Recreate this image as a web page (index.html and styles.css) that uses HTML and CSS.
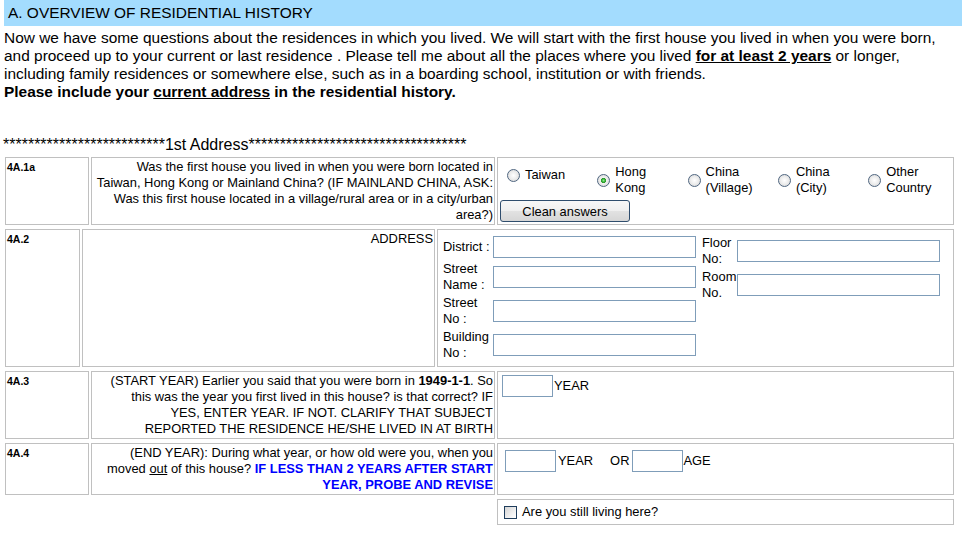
FILE: index.html
```html
<!DOCTYPE html>
<html lang="en">
<head>
<meta charset="utf-8">
<title>Residential History</title>
<link rel="stylesheet" href="styles.css">
</head>
<body>
<div class="page">
  <div class="section-title">A. OVERVIEW OF RESIDENTIAL HISTORY</div>
  <p class="intro">Now we have some questions about the residences in which you lived. We will start with the first house you lived in when you were born,<br>and proceed up to your current or last residence . Please tell me about all the places where you lived <b><u>for at least 2 years</u></b> or longer,<br>including family residences or somewhere else, such as in a boarding school, institution or with friends.<br><b>Please include your <u>current address</u> in the residential history.</b></p>

  <div class="divider">**************************1st Address***********************************</div>

  <div class="qrow cols-a">
    <div class="cell code">4A.1a</div>
    <div class="cell question">Was the first house you lived in when you were born located in<br>Taiwan, Hong Kong or Mainland China? (IF MAINLAND CHINA, ASK:<br>Was this first house located in a village/rural area or in a city/urban<br>area?)</div>
    <div class="cell answer">
      <div class="options">
        <label class="option option-single"><input type="radio" name="loc"><span>Taiwan</span></label>
        <label class="option"><input type="radio" name="loc" checked><span>Hong<br>Kong</span></label>
        <label class="option"><input type="radio" name="loc"><span>China<br>(Village)</span></label>
        <label class="option"><input type="radio" name="loc"><span>China<br>(City)</span></label>
        <label class="option"><input type="radio" name="loc"><span>Other<br>Country</span></label>
      </div>
      <button class="btn" type="button">Clean answers</button>
    </div>
  </div>

  <div class="qrow cols-b">
    <div class="cell code">4A.2</div>
    <div class="cell question">ADDRESS</div>
    <div class="cell address-cell">
      <div class="addr-grid left">
        <div class="lbl">District :</div><div class="fld"><input type="text"></div>
        <div class="lbl">Street<br>Name :</div><div class="fld"><input type="text"></div>
        <div class="lbl">Street<br>No :</div><div class="fld"><input type="text"></div>
        <div class="lbl">Building<br>No :</div><div class="fld"><input type="text"></div>
      </div>
      <div class="addr-grid right">
        <div class="lbl">Floor<br>No:</div><div class="fld"><input type="text"></div>
        <div class="lbl">Room<br>No.</div><div class="fld"><input type="text"></div>
      </div>
    </div>
  </div>

  <div class="qrow cols-a">
    <div class="cell code">4A.3</div>
    <div class="cell question">(START YEAR) Earlier you said that you were born in <b>1949-1-1</b>. So<br>this was the year you first lived in this house? is that correct? IF<br>YES, ENTER YEAR. IF NOT. CLARIFY THAT SUBJECT<br>REPORTED THE RESIDENCE HE/SHE LIVED IN AT BIRTH</div>
    <div class="cell">
      <div class="inline-answer start">
        <input type="text" class="short">
        <span class="unit">YEAR</span>
      </div>
    </div>
  </div>

  <div class="qrow cols-a">
    <div class="cell code">4A.4</div>
    <div class="cell question">(END YEAR): During what year, or how old were you, when you<br>moved <u>out</u> of this house? <b class="probe">IF LESS THAN 2 YEARS AFTER START</b><br><b class="probe">YEAR, PROBE AND REVISE</b></div>
    <div class="cell">
      <div class="inline-answer end">
        <input type="text" class="short">
        <span class="unit year">YEAR</span>
        <span class="unit or">OR</span>
        <input type="text" class="short">
        <span class="unit age">AGE</span>
      </div>
    </div>
  </div>

  <div class="qrow cols-a">
    <div class="blank"></div>
    <div class="blank"></div>
    <label class="cell check-cell"><input type="checkbox"><span>Are you still living here?</span></label>
  </div>
</div>
</body>
</html>
```

FILE: styles.css
```css
* {
  box-sizing: border-box;
}

body {
  margin: 0;
  background: #ffffff;
  color: #000000;
  font-family: "Liberation Sans", Arial, sans-serif;
}

.section-title {
  margin-left: 4px;
  height: 26px;
  line-height: 26px;
  padding-left: 4px;
  background: #a3dcfe;
  font-size: 15.45px;
  white-space: nowrap;
}

.intro {
  margin: 0;
  padding: 3px 0 0 4px;
  font-size: 15.45px;
  line-height: 18px;
  white-space: nowrap;
}

.divider {
  margin-top: 35px;
  padding-left: 3px;
  font-size: 16px;
  line-height: 18px;
  white-space: nowrap;
}

.qrow {
  display: grid;
  gap: 2px;
  padding: 2px;
  margin-left: 3px;
  width: 953px;
}

.divider + .qrow {
  margin-top: 1px;
}

.cols-a {
  grid-template-columns: 84px 404px 457px;
}

.cols-b {
  grid-template-columns: 75px 353px 517px;
}

.cell {
  border: 1px solid #c0c0c0;
  padding: 1px;
  font-size: 12.9px;
  line-height: 16px;
}

.code {
  font-weight: bold;
  font-size: 10.5px;
  line-height: 12px;
  padding: 3px 1px;
}

.question {
  text-align: right;
  white-space: nowrap;
}

.probe {
  color: #0000ff;
}

/* radio answer */
.options {
  display: grid;
  grid-template-columns: repeat(5, 90.3px);
  align-items: start;
  padding: 5px 0 0 4px;
}

.option {
  display: flex;
  align-items: center;
  white-space: nowrap;
}

.option-single {
  margin-top: 3px;
}

input[type="radio"] {
  -webkit-appearance: none;
  appearance: none;
  flex: none;
  width: 13px;
  height: 13px;
  margin: 0 5px 0 4px;
  border: 1px solid #4f6680;
  border-radius: 50%;
  background: radial-gradient(circle at 50% 50%, #ffffff 0%, #eeeeee 45%, #d2d2d2 100%);
}

input[type="radio"]:checked {
  background:
    radial-gradient(circle at 50% 50%, #8ee88e 0, #36b536 1.6px, #2a8f2a 2.4px, rgba(255,255,255,0) 2.9px),
    radial-gradient(circle at 50% 50%, #ffffff 0%, #eeeeee 45%, #d2d2d2 100%);
}

.btn {
  display: block;
  width: 130px;
  height: 22px;
  margin: 4px 0 0 1px;
  padding: 0;
  border: 1px solid #2f4d6d;
  border-radius: 3px;
  background: linear-gradient(#f7f7f7 0%, #efefef 50%, #e2e2e2 51%, #d6d6d6 100%);
  font-family: "Liberation Sans", Arial, sans-serif;
  font-size: 12.9px;
  color: #000000;
}

/* address */
.address-cell {
  display: flex;
  align-items: flex-start;
  padding: 4px 1px 4px 4px;
}

.addr-grid {
  display: grid;
  align-items: center;
}

.addr-grid.left {
  grid-template-columns: 51px 203px;
}

.addr-grid.right {
  grid-template-columns: 36px 203px;
  margin-left: 5px;
}

.lbl {
  padding: 1px 0 1px 1px;
  line-height: 16px;
  white-space: nowrap;
}

.fld {
  display: flex;
}

input[type="text"] {
  width: 203px;
  height: 22px;
  margin: 2px 0;
  padding: 0 2px;
  border: 1px solid #7f9db9;
  background: #ffffff;
  font-family: "Liberation Sans", Arial, sans-serif;
  font-size: 12.9px;
}

input[type="text"].short {
  width: 51px;
  margin: 0;
}

/* inline year answers */
.inline-answer {
  display: flex;
  align-items: center;
}

.inline-answer.start {
  padding: 2px 0 0 3px;
}

.inline-answer.start .unit {
  margin-left: 1px;
}

.inline-answer.end {
  padding: 5px 0 0 6px;
}

.unit.year {
  margin-left: 2px;
}

.unit.or {
  margin-left: 17px;
  margin-right: 3px;
}

.unit.age {
  margin-left: 0;
}

/* checkbox row */
.check-cell {
  display: flex;
  align-items: center;
  padding: 4px 1px 4px 6px;
}

input[type="checkbox"] {
  -webkit-appearance: none;
  appearance: none;
  flex: none;
  width: 13px;
  height: 13px;
  margin: 0 5px 0 0;
  border: 1px solid #1f3d5c;
  background: linear-gradient(135deg, #d4d4d4 0%, #f4f4f4 70%, #ffffff 100%);
}
```
